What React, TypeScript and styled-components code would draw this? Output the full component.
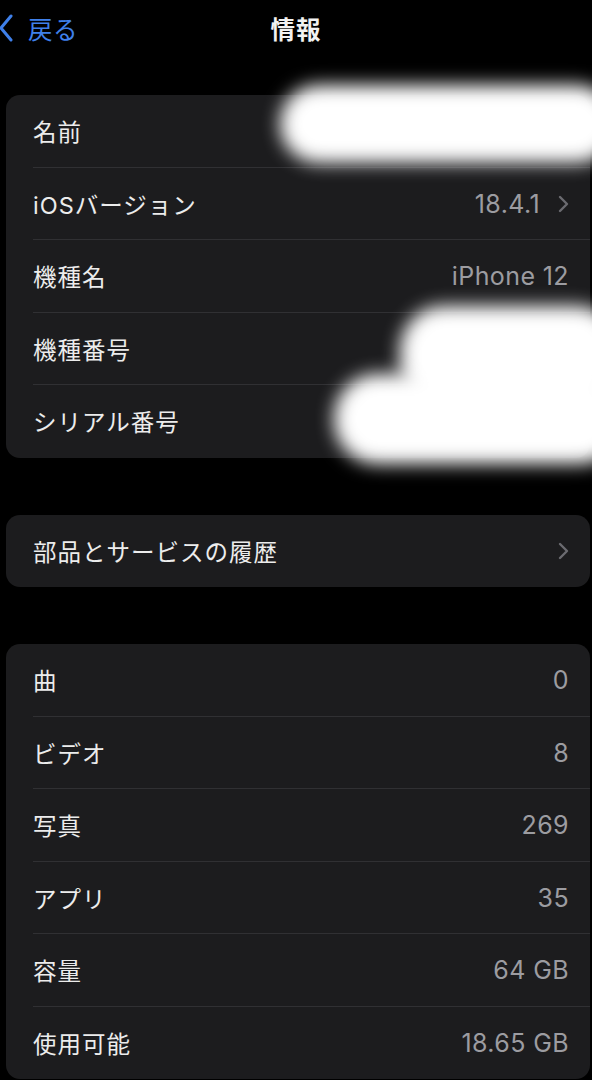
import React from 'react'
import styled, { createGlobalStyle } from 'styled-components'

const GlobalStyle = createGlobalStyle`
  html, body {
    margin: 0;
    padding: 0;
    background: #000;
  }
  body {
    font-family: "Inter", "Noto Sans CJK JP", sans-serif;
    -webkit-font-smoothing: antialiased;
  }
`

const Page = styled.div`
  position: relative;
  width: 592px;
  min-height: 1080px;
  background: #000;
  overflow: hidden;
`

const NavBar = styled.header`
  display: grid;
  grid-template-columns: 1fr auto 1fr;
  align-items: center;
  height: 56px;
`

const BackButton = styled.div`
  display: flex;
  align-items: center;
  gap: 15px;
  color: #3f80ea;
  font-size: 24.5px;
  letter-spacing: 0.5px;
  svg {
    margin-left: -1px;
  }
`

const Title = styled.h1`
  margin: 0;
  color: #f2f2f2;
  font-size: 24.5px;
  font-weight: 600;
  letter-spacing: 1px;
`

const Content = styled.main`
  display: flex;
  flex-direction: column;
  gap: 57px;
  padding: 39px 2px 0 6px;
`

const Group = styled.section`
  background: #1c1c1e;
  border-radius: 14px;
  overflow: hidden;
`

const Row = styled.div<{ $last?: boolean }>`
  position: relative;
  display: flex;
  align-items: center;
  justify-content: space-between;
  height: 72.5px;
  padding: 0 21px 0 27px;
  &::after {
    content: '';
    display: ${p => (p.$last ? 'none' : 'block')};
    position: absolute;
    left: 27px;
    right: 0;
    bottom: 0;
    height: 1px;
    background: #303033;
  }
`

const Label = styled.span`
  color: #ececec;
  font-size: 23.5px;
  letter-spacing: 1px;
`

const Value = styled.span`
  display: flex;
  align-items: center;
  gap: 18px;
  color: #9c9ca1;
  font-size: 25px;
  letter-spacing: 0.4px;
`

const Redaction = styled.div<{ $top: number; $left: number; $width: number; $height: number; $radius: number }>`
  position: absolute;
  top: ${p => p.$top}px;
  left: ${p => p.$left}px;
  width: ${p => p.$width}px;
  height: ${p => p.$height}px;
  border-radius: ${p => p.$radius}px;
  background: #fff;
  filter: blur(9px);
`

const Chevron = () => (
  <svg width="11" height="18" viewBox="0 0 11 18" fill="none">
    <path d="M2 2l7 7-7 7" stroke="#6b6b70" strokeWidth="2.4" strokeLinecap="round" strokeLinejoin="round" />
  </svg>
)

const BackChevron = () => (
  <svg width="14" height="28" viewBox="0 0 14 28" fill="none">
    <path d="M12 2L2 14l10 12" stroke="#3f80ea" strokeWidth="3" strokeLinecap="round" strokeLinejoin="round" />
  </svg>
)

type Item = { label: string; value?: string; chevron?: boolean }

const about: Item[] = [
  { label: '名前' },
  { label: 'iOSバージョン', value: '18.4.1', chevron: true },
  { label: '機種名', value: 'iPhone 12' },
  { label: '機種番号' },
  { label: 'シリアル番号' },
]

const history: Item[] = [{ label: '部品とサービスの履歴', chevron: true }]

const counts: Item[] = [
  { label: '曲', value: '0' },
  { label: 'ビデオ', value: '8' },
  { label: '写真', value: '269' },
  { label: 'アプリ', value: '35' },
  { label: '容量', value: '64 GB' },
  { label: '使用可能', value: '18.65 GB' },
]

function SettingsGroup ({ items }: { items: Item[] }) {
  return (
    <Group>
      {items.map((item, i) => (
        <Row key={item.label} $last={i === items.length - 1}>
          <Label>{item.label}</Label>
          <Value>
            {item.value}
            {item.chevron && <Chevron />}
          </Value>
        </Row>
      ))}
    </Group>
  )
}

export default function App () {
  return (
    <Page>
      <GlobalStyle />
      <NavBar>
        <BackButton>
          <BackChevron />
          戻る
        </BackButton>
        <Title>情報</Title>
        <div />
      </NavBar>
      <Content>
        <SettingsGroup items={about} />
        <SettingsGroup items={history} />
        <SettingsGroup items={counts} />
      </Content>
      <Redaction $top={85} $left={280} $width={336} $height={78} $radius={39} />
      <Redaction $top={306} $left={400} $width={220} $height={100} $radius={44} />
      <Redaction $top={374} $left={334} $width={290} $height={90} $radius={44} />
    </Page>
  )
}
